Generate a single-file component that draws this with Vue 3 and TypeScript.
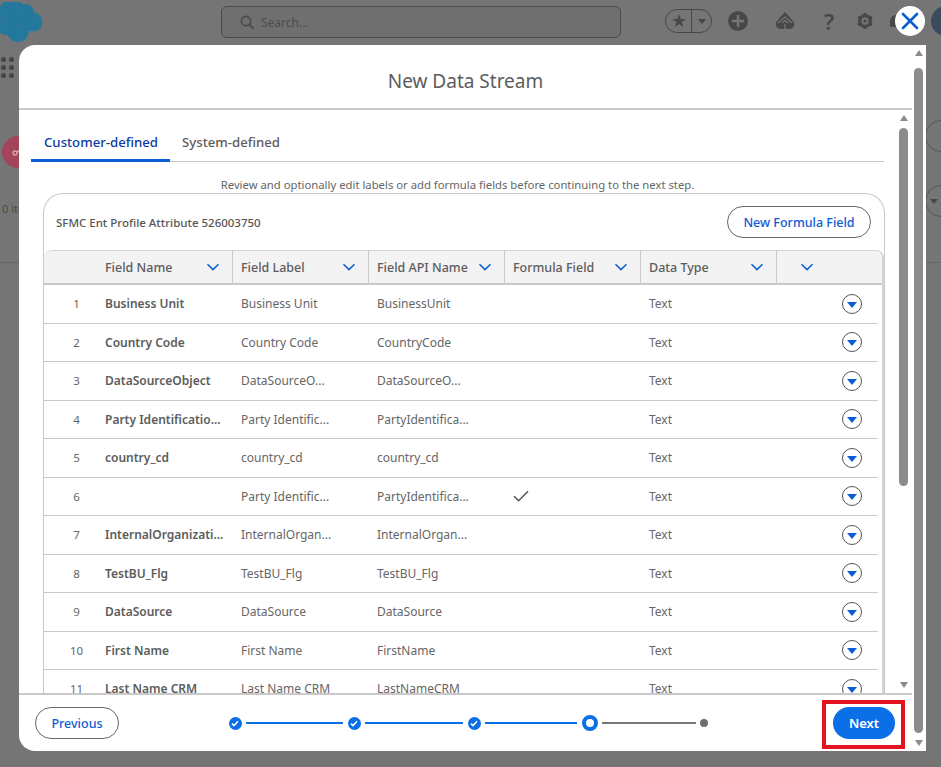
<template>
  <div class="page">
    <header class="topbar">
      <svg class="cloud" viewBox="0 0 44 44" aria-hidden="true">
        <circle cx="12" cy="10" r="13" />
        <circle cx="25" cy="12" r="10" />
        <circle cx="33" cy="20" r="9.5" />
        <circle cx="18" cy="29" r="11" />
        <circle cx="6" cy="24" r="9" />
      </svg>
      <div class="search">
        <svg width="14" height="14" viewBox="0 0 14 14" aria-hidden="true">
          <circle cx="6" cy="6" r="4.6" fill="none" stroke="#4a4a4a" stroke-width="1.6" />
          <path d="M9.5 9.5l3.6 3.6" stroke="#4a4a4a" stroke-width="1.8" stroke-linecap="round" />
        </svg>
        <span>Search...</span>
      </div>
      <div class="tools">
        <div class="fav">
          <span class="fav-star">★</span>
          <span class="fav-drop"><i class="tri"></i></span>
        </div>
        <svg class="tool" width="22" height="22" viewBox="0 0 22 22" aria-hidden="true">
          <circle cx="11" cy="11" r="10" fill="#484848" />
          <path d="M11 5v12M5 11h12" stroke="#757575" stroke-width="2.4" />
        </svg>
        <svg class="tool" width="20" height="18" viewBox="0 0 20 18" aria-hidden="true">
          <path d="M10 0l5 5.5 4 5c1 3-1 6-4 6.500H5c-3-.5-5-3.500-4-6.500l4-5z" fill="#484848" />
          <path d="M3 11l7-6 7 6M7 11l3-2.500 3 2.500M10 12v5" fill="none" stroke="#757575" stroke-width="1.3" />
        </svg>
        <span class="help">?</span>
        <svg class="tool" width="16" height="16" viewBox="0 0 18 18" aria-hidden="true">
          <circle cx="9" cy="9" r="6" fill="none" stroke="#484848" stroke-width="3.8" />
          <path d="M9 0v3M9 15v3M1.200 4.500l2.600 1.500M14.200 12l2.600 1.500M16.800 4.500L14.200 6M3.800 12l-2.600 1.500" stroke="#484848" stroke-width="3.200" />
          <circle cx="9" cy="9" r="1.800" fill="#484848" />
        </svg>
      </div>
    </header>

    <div class="launcher">
      <i v-for="n in 9" :key="n"></i>
    </div>
    <div class="page-icon">
      <svg width="12" height="8" viewBox="0 0 12 8" aria-hidden="true">
        <circle cx="3" cy="5" r="2" fill="none" stroke="#d9a3b0" stroke-width="1.4" />
        <path d="M5 4l6-3" stroke="#d9a3b0" stroke-width="1.6" />
      </svg>
    </div>
    <div class="page-count">0 items</div>
    <div class="page-rule"></div>
    <div class="side-btn top"></div>
    <div class="side-btn bottom"><i class="tri"></i></div>
    <div class="bell"></div>

    <button class="close" type="button" aria-label="Close">
      <svg width="18" height="18" viewBox="0 0 18 18" aria-hidden="true">
        <path d="M2 2l14 14M16 2L2 16" stroke="#0b5cd5" stroke-width="2.6" stroke-linecap="round" />
      </svg>
    </button>
    <div class="avatar"></div>

    <section class="modal">
      <div class="modal-main">
        <h2 class="modal-title">New Data Stream</h2>

        <div class="modal-body">
          <div class="content">
            <div class="tabs">
              <span class="tab active">Customer-defined</span>
              <span class="tab">System-defined</span>
            </div>
            <p class="hint">Review and optionally edit labels or add formula fields before continuing to the next step.</p>

            <div class="card">
              <div class="card-head">
                <span class="card-title">SFMC Ent Profile Attribute 526003750</span>
                <button class="btn-outline formula" type="button">New Formula Field</button>
              </div>

              <div class="table">
                <div class="thead">
                  <div class="th-num"></div>
                  <div v-for="col in columns" :key="col" class="th">
                    <span>{{ col }}</span>
                    <svg width="14" height="8" viewBox="0 0 14 8" aria-hidden="true">
                      <path d="M1.500 1.200L7 6.600l5.500-5.400" fill="none" stroke="#0b5cd5" stroke-width="1.500" />
                    </svg>
                  </div>
                  <div class="th-last">
                    <svg width="14" height="8" viewBox="0 0 14 8" aria-hidden="true">
                      <path d="M1.500 1.200L7 6.600l5.500-5.400" fill="none" stroke="#0b5cd5" stroke-width="1.500" />
                    </svg>
                  </div>
                </div>

                <div v-for="(row, i) in rows" :key="i" class="tr">
                  <div class="num">{{ i + 1 }}</div>
                  <div class="name">{{ row.name }}</div>
                  <div class="cell">{{ row.label }}</div>
                  <div class="cell">{{ row.api }}</div>
                  <div class="cell">
                    <svg v-if="row.formula" width="16" height="12" viewBox="0 0 16 12" aria-hidden="true">
                      <path d="M1 6.200l4.600 4.600L15 1.200" fill="none" stroke="#555" stroke-width="1.500" />
                    </svg>
                  </div>
                  <div class="cell">Text</div>
                  <div class="action">
                    <span class="row-menu"><i class="tri blue"></i></span>
                  </div>
                </div>
              </div>
            </div>
          </div>

          <div class="scroll inner">
            <i class="arrow up"></i>
            <div class="track"><div class="thumb"></div></div>
            <i class="arrow down"></i>
          </div>
        </div>

        <footer class="modal-foot">
          <button class="btn-outline" type="button">Previous</button>
          <div class="steps">
            <template v-for="(width, n) in doneLines" :key="n">
              <span class="step-done">
                <svg width="8" height="7" viewBox="0 0 8 7" aria-hidden="true">
                  <path d="M1 3.600l2 2 4-4.400" fill="none" stroke="#fff" stroke-width="1.500" />
                </svg>
              </span>
              <span class="step-line" :style="{ width: width + 'px' }"></span>
            </template>
            <span class="step-current"></span>
            <span class="step-line todo"></span>
            <span class="step-todo"></span>
          </div>
          <div class="next-wrap">
            <button class="btn-next" type="button">Next</button>
            <span class="highlight"></span>
          </div>
        </footer>
      </div>

      <div class="scroll outer">
        <i class="arrow up"></i>
        <div class="track"><div class="thumb"></div></div>
        <i class="arrow down"></i>
      </div>
    </section>
  </div>
</template>

<script setup lang="ts">
interface FieldRow {
  name: string
  label: string
  api: string
  formula?: boolean
}

const columns = ['Field Name', 'Field Label', 'Field API Name', 'Formula Field', 'Data Type']

const doneLines = [97, 98, 92]

const rows: FieldRow[] = [
  { name: 'Business Unit', label: 'Business Unit', api: 'BusinessUnit' },
  { name: 'Country Code', label: 'Country Code', api: 'CountryCode' },
  { name: 'DataSourceObject', label: 'DataSourceO...', api: 'DataSourceO...' },
  { name: 'Party Identificatio...', label: 'Party Identific...', api: 'PartyIdentifica...' },
  { name: 'country_cd', label: 'country_cd', api: 'country_cd' },
  { name: '', label: 'Party Identific...', api: 'PartyIdentifica...', formula: true },
  { name: 'InternalOrganizati...', label: 'InternalOrgan...', api: 'InternalOrgan...' },
  { name: 'TestBU_Flg', label: 'TestBU_Flg', api: 'TestBU_Flg' },
  { name: 'DataSource', label: 'DataSource', api: 'DataSource' },
  { name: 'First Name', label: 'First Name', api: 'FirstName' },
  { name: 'Last Name CRM', label: 'Last Name CRM', api: 'LastNameCRM' }
]
</script>

<style>
html,
body {
  margin: 0;
  background: #757575;
}
</style>

<style scoped>
.page {
  position: relative;
  width: 941px;
  height: 767px;
  overflow: hidden;
  background: #757575;
  font-family: "Noto Sans", "Open Sans", sans-serif;
  color: #5c5c5c;
}

.topbar {
  display: flex;
  align-items: flex-start;
  height: 45px;
  padding-top: 6px;
  box-sizing: border-box;
}

.cloud {
  flex: none;
  width: 44px;
  height: 44px;
  margin-top: -4px;
  fill: #23789b;
}

.search {
  display: flex;
  flex: none;
  align-items: center;
  gap: 7px;
  width: 400px;
  height: 32px;
  margin-left: 177px;
  padding-left: 18px;
  box-sizing: border-box;
  border: 1px solid #4a4a4a;
  border-radius: 6px;
  background: #6f6f6f;
  font-size: 12px;
  color: #4d4d4d;
}

.tools {
  display: flex;
  align-items: center;
  height: 30px;
  margin-left: 44px;
}

.fav {
  display: flex;
  width: 47px;
  height: 24px;
  box-sizing: border-box;
  border: 1px solid #484848;
  border-radius: 12px;
}

.fav-star {
  width: 25px;
  border-right: 1px solid #484848;
  font-size: 18px;
  line-height: 21px;
  text-align: center;
  color: #484848;
}

.fav-drop {
  display: flex;
  flex: 1;
  align-items: center;
  justify-content: center;
}

.tri {
  display: block;
  width: 0;
  height: 0;
  border-left: 4.5px solid transparent;
  border-right: 4.5px solid transparent;
  border-top: 5px solid #484848;
}

.tri.blue {
  border-left-width: 5px;
  border-right-width: 5px;
  border-top: 6px solid #0b5cd5;
  margin-top: 2px;
}

.tool {
  margin-left: 15px;
}

.tool:nth-of-type(2) {
  margin-left: 26px;
}

.help {
  margin-left: 29px;
  font-size: 22px;
  font-weight: 600;
  color: #484848;
}

.help + .tool {
  margin-left: 23px;
}

.launcher {
  position: absolute;
  left: -7px;
  top: 57px;
  display: grid;
  grid-template-columns: repeat(3, 5px);
  gap: 3px;
}

.launcher i {
  width: 5px;
  height: 5px;
  border-radius: 50%;
  background: #454545;
}

.page-icon {
  position: absolute;
  left: 2px;
  top: 136px;
  display: flex;
  align-items: center;
  justify-content: center;
  width: 32px;
  height: 32px;
  border-radius: 50%;
  background: #a3445b;
}

.page-count {
  position: absolute;
  left: 2px;
  top: 201px;
  font-size: 11px;
  color: #4a4a4a;
}

.page-rule {
  position: absolute;
  left: 0;
  right: 0;
  top: 262px;
  height: 1px;
  background: #666;
}

.side-btn {
  position: absolute;
  left: 925px;
  display: flex;
  align-items: center;
  width: 32px;
  height: 32px;
  padding-left: 4px;
  box-sizing: border-box;
  border: 1px solid #555;
  border-radius: 50%;
}

.side-btn.top {
  top: 120px;
}

.side-btn.bottom {
  top: 185px;
}

.bell {
  position: absolute;
  left: 890px;
  top: 15px;
  width: 14px;
  height: 12px;
  border-radius: 6px 6px 0 0;
  background: #484848;
}

.close {
  position: absolute;
  left: 895px;
  top: 6px;
  z-index: 3;
  display: flex;
  align-items: center;
  justify-content: center;
  width: 30px;
  height: 30px;
  padding: 0;
  border: 0;
  border-radius: 50%;
  background: #fff;
}

.avatar {
  position: absolute;
  left: 931px;
  top: 6px;
  width: 30px;
  height: 30px;
  border-radius: 50%;
  background: #3d4a5c;
}

.modal {
  position: absolute;
  left: 19px;
  top: 45px;
  display: flex;
  width: 907px;
  height: 706px;
  overflow: hidden;
  border-radius: 16px 0 0 16px;
  background: #fff;
}

.modal-main {
  display: flex;
  flex: 1;
  flex-direction: column;
  min-width: 0;
}

.modal-title {
  height: 63px;
  margin: 0;
  border-bottom: 2px solid #c9c9c9;
  font-size: 19px;
  font-weight: 400;
  line-height: 72px;
  text-align: center;
  color: #5c5c5c;
}

.modal-body {
  display: flex;
  flex: 1;
  min-height: 0;
  overflow: hidden;
}

.content {
  flex: 1;
  min-width: 0;
  padding: 15px 0 0 12px;
}

.tabs {
  display: flex;
  height: 37px;
  box-sizing: border-box;
  border-bottom: 1px solid #c9c9c9;
}

.tab {
  padding: 8px 0 0 12px;
  font-size: 13.2px;
  font-weight: 500;
  color: #5c5c5c;
}

.tab.active {
  width: 139px;
  height: 37px;
  padding-left: 13px;
  box-sizing: border-box;
  border-bottom: 3px solid #0b5cd5;
  color: #0b3a9e;
}

.hint {
  margin: 15px 0 0;
  font-size: 11.3px;
  line-height: 16px;
  text-align: center;
  color: #666;
}

.card {
  height: 560px;
  margin: 0 -1px 0 12px;
  border: 1px solid #c9c9c9;
  border-bottom: 0;
  border-radius: 20px 20px 0 0;
}

.card-head {
  display: flex;
  align-items: center;
  justify-content: space-between;
  height: 56px;
  padding: 0 13px 0 12px;
}

.card-title {
  font-size: 11.5px;
  font-weight: 500;
  color: #555;
}

.btn-outline {
  height: 32px;
  padding: 0;
  border: 1px solid #666;
  border-radius: 16px;
  background: #fff;
  font-family: inherit;
  font-size: 12.5px;
  font-weight: 500;
  color: #0b5cd5;
}

.btn-outline.formula {
  width: 144px;
}

.table {
  border-top: 1px solid #d4d4d4;
  border-right: 2px solid #d4d4d4;
  border-radius: 8px 8px 0 0;
}

.thead,
.tr {
  display: grid;
  grid-template-columns: 53px 136px 136px 136px 136px 136px 101px;
}

.thead {
  height: 32px;
  border-bottom: 2px solid #c9c9c9;
  border-radius: 8px 8px 0 0;
  background: #f3f3f3;
  font-size: 12.5px;
  font-weight: 500;
  color: #5c5c5c;
}

.th {
  display: flex;
  align-items: center;
  justify-content: space-between;
  box-sizing: border-box;
  padding: 0 12px 0 8px;
  border-right: 1px solid #c9c9c9;
}

.th-last {
  display: flex;
  align-items: center;
  padding-left: 23px;
}

.tr {
  width: 834px;
  height: 38.5px;
  box-sizing: border-box;
  border-bottom: 1px solid #c9c9c9;
  align-items: center;
  font-size: 12px;
  color: #666;
}

.tr:first-of-type {
  padding-top: 1px;
}

.num {
  padding-left: 12px;
  font-size: 11.5px;
  text-align: center;
}

.name {
  padding-left: 8px;
  font-weight: 600;
  color: #5c5c5c;
  white-space: nowrap;
}

.cell {
  display: flex;
  align-items: center;
  padding-left: 8px;
  white-space: nowrap;
}

.action {
  display: flex;
  justify-content: flex-end;
  padding-right: 16px;
}

.row-menu {
  display: flex;
  align-items: center;
  justify-content: center;
  width: 20px;
  height: 20px;
  box-sizing: border-box;
  border: 1px solid #555;
  border-radius: 50%;
}

.scroll {
  display: flex;
  flex-direction: column;
  align-items: center;
}

.scroll .track {
  flex: 1;
  width: 9px;
}

.scroll .thumb {
  border-radius: 4.5px;
  background: #8c8c8c;
}

.arrow {
  display: block;
  width: 0;
  height: 0;
  border-left: 4.5px solid transparent;
  border-right: 4.5px solid transparent;
}

.arrow.up {
  border-bottom: 6px solid #8c8c8c;
}

.arrow.down {
  border-top: 6px solid #8c8c8c;
}

.inner {
  width: 9px;
  margin: 0 4px 0 15px;
  padding: 5px 0;
}

.inner .track {
  margin-top: 7px;
}

.inner .thumb {
  height: 358px;
}

.outer {
  width: 9px;
  margin: 0 3px 0 2px;
  padding: 5px 0;
}

.outer .track {
  display: flex;
  margin-top: 12px;
  margin-bottom: 7px;
}

.outer .thumb {
  flex: 1;
}

.modal-foot {
  display: flex;
  align-items: center;
  height: 58px;
  box-sizing: border-box;
  padding: 0 17px 0 16px;
  border-top: 2px solid #c9c9c9;
}

.modal-foot .btn-outline {
  width: 84px;
}

.steps {
  display: flex;
  align-items: center;
  margin-left: 109.5px;
}

.step-done {
  display: flex;
  flex: none;
  align-items: center;
  justify-content: center;
  width: 13px;
  height: 13px;
  border-radius: 50%;
  background: #0b6fe8;
}

.step-line {
  height: 2px;
  margin: 0 4.5px;
  background: #0b6fe8;
}

.step-line.todo {
  width: 94px;
  margin: 0 4px;
  background: #777;
}

.step-current {
  flex: none;
  width: 16px;
  height: 16px;
  box-sizing: border-box;
  border: 4px solid #0b6fe8;
  border-radius: 50%;
}

.step-todo {
  flex: none;
  width: 8px;
  height: 8px;
  border-radius: 50%;
  background: #6f6f6f;
}

.next-wrap {
  position: relative;
  margin-left: auto;
}

.btn-next {
  display: block;
  width: 62px;
  height: 32px;
  padding: 0;
  border: 0;
  border-radius: 16px;
  background: #0b6fe8;
  font-family: inherit;
  font-size: 13px;
  font-weight: 600;
  color: #fff;
}

.highlight {
  position: absolute;
  inset: -7px -10px -10px -11px;
  border: 4px solid #e2141f;
}
</style>
